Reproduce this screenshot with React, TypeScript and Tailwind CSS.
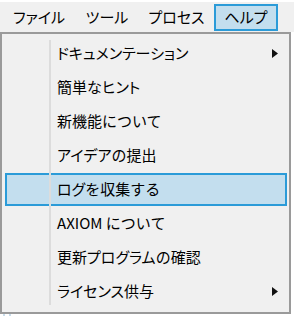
const menuBar = [
  { label: "ファイル", w: "w-[72px]" },
  { label: "ツール", w: "w-[64px]" },
  { label: "プロセス", w: "w-[75px]" },
  { label: "ヘルプ", w: "w-[64px]", open: true },
];

const items = [
  { label: "ドキュメンテーション", sub: true },
  { label: "簡単なヒント" },
  { label: "新機能について" },
  { label: "アイデアの提出" },
  { label: "ログを収集する", active: true },
  { label: "AXIOM について" },
  { label: "更新プログラムの確認" },
  { label: "ライセンス供与", sub: true },
];

function Label({ text }: { text: string }) {
  const parts = text.split(/([\u30A0-\u30FF]+)/).filter(Boolean);
  return (
    <span>
      {parts.map((p, i) =>
        /[\u30A0-\u30FF]/.test(p) ? (
          <span key={i} className="[font-feature-settings:'palt']">
            {p}
          </span>
        ) : (
          <span key={i}>{p}</span>
        )
      )}
    </span>
  );
}

function SubArrow() {
  return (
    <svg width="6" height="9" viewBox="0 0 6 9" className="shrink-0">
      <polygon points="0,0 6,4.5 0,9" fill="#111" />
    </svg>
  );
}

export default function App() {
  return (
    <div className="h-[316px] w-[294px] overflow-hidden bg-white font-['Noto_Sans_CJK_JP','Noto_Sans',sans-serif] text-[15px] text-black">
      <div className="mt-[2px] flex h-[30px] bg-[#f0f0f0] pl-[3px] pt-[2px]">
        {menuBar.map((m) => (
          <div
            key={m.label}
            className={`flex h-[27px] items-center justify-center border-2 ${m.w} ${
              m.open ? "border-[#2b9bd8] bg-[#c3deee]" : "border-transparent"
            }`}
          >
            <Label text={m.label} />
          </div>
        ))}
      </div>

      <div className="relative h-[282px] w-[291px] border-2 border-[#9a9a9a] bg-[#f0f0f0] pt-[2px]">
        <div className="pointer-events-none absolute bottom-[7px] left-[47px] top-[6px] w-[2px] bg-[#dcdcdc]" />
        {items.map((it) => (
          <div key={it.label} className="h-[34px] pl-[3px] pr-[2px] pt-[1px]">
            <div
              className={`flex h-[33px] items-center justify-between border-2 pl-[50px] pr-[7px] ${
                it.active ? "border-[#2b9bd8] bg-[#c3deee]" : "border-transparent"
              }`}
            >
              <Label text={it.label} />
              {it.sub && <SubArrow />}
            </div>
          </div>
        ))}
      </div>
      <div className="flex gap-[4px] pl-[3px]">
        <div className="h-[2px] w-[2px] bg-[#c9dcea]" />
        <div className="h-[2px] w-[2px] bg-[#c9dcea]" />
      </div>
    </div>
  );
}
